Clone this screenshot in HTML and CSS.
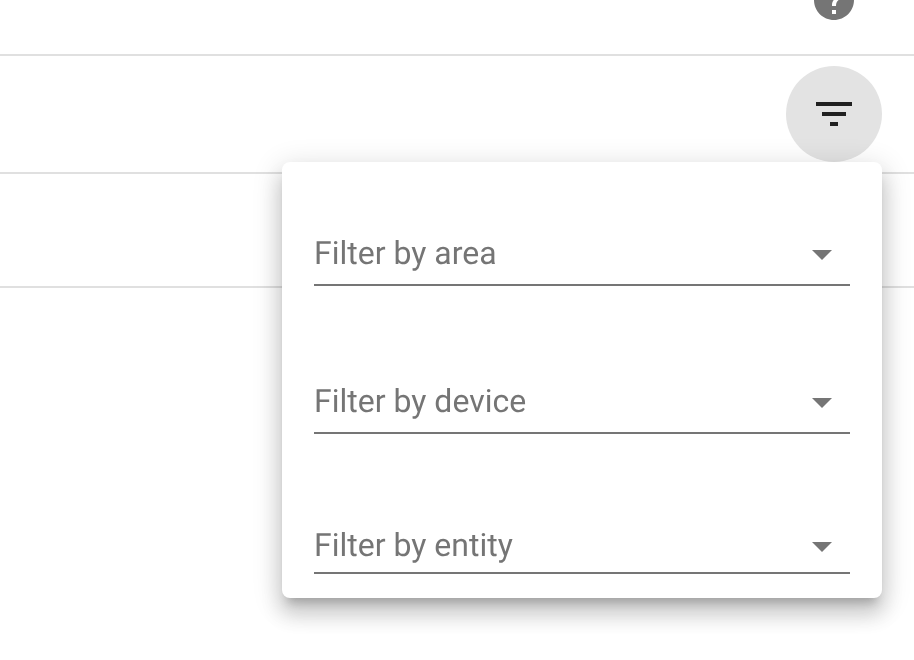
FILE: index.html
```html
<!DOCTYPE html>
<html lang="en">
<head>
<meta charset="utf-8">
<title>Filters</title>
<link rel="stylesheet" href="styles.css">
</head>
<body>
<div class="page">
  <div class="row row-help">
    <svg class="help-icon" viewBox="0 0 24 24" aria-hidden="true"><path d="M12 2C6.48 2 2 6.48 2 12s4.48 10 10 10 10-4.48 10-10S17.52 2 12 2zm1 17h-2v-2h2v2zm2.07-7.75l-.9.92C13.45 12.9 13 13.5 13 15h-2v-.5c0-1.1.45-2.1 1.17-2.83l1.24-1.26c.37-.36.59-.86.59-1.41 0-1.1-.9-2-2-2s-2 .9-2 2H8c0-2.21 1.79-4 4-4s4 1.79 4 4c0 .88-.36 1.68-.93 2.25z"/></svg>
  </div>
  <div class="row row-filter">
    <button class="filter-button" type="button" aria-label="Filter">
      <svg class="filter-icon" viewBox="0 0 24 24" aria-hidden="true"><path d="M10 18h4v-2h-4v2zM3 6v2h18V6H3zm3 7h12v-2H6v2z"/></svg>
    </button>
  </div>
  <div class="row row-empty"></div>
  <div class="menu">
    <div class="field">
      <span class="label">Filter by area</span>
      <svg class="caret" viewBox="0 0 24 24" aria-hidden="true"><path d="M7 10l5 5 5-5z"/></svg>
    </div>
    <div class="field">
      <span class="label">Filter by device</span>
      <svg class="caret" viewBox="0 0 24 24" aria-hidden="true"><path d="M7 10l5 5 5-5z"/></svg>
    </div>
    <div class="field field-last">
      <span class="label">Filter by entity</span>
      <svg class="caret" viewBox="0 0 24 24" aria-hidden="true"><path d="M7 10l5 5 5-5z"/></svg>
    </div>
  </div>
</div>
</body>
</html>
```
FILE: styles.css
```css
html, body {
  margin: 0;
  padding: 0;
  background: #fff;
  overflow: hidden;
}
.page {
  position: relative;
  width: 914px;
  height: 660px;
  overflow: hidden;
  font-family: Roboto, "Liberation Sans", sans-serif;
}
.row {
  display: flex;
  justify-content: flex-end;
  padding-right: 32px;
  border-bottom: 2px solid #e0e0e0;
  box-sizing: border-box;
}
.row-help {
  height: 56px;
  padding-right: 56px;
  align-items: flex-start;
}
.help-icon {
  width: 48px;
  height: 48px;
  margin-top: -24px;
  fill: #757575;
  flex: none;
}
.row-filter {
  height: 118px;
  padding-top: 10px;
  align-items: flex-start;
}
.filter-button {
  width: 96px;
  height: 96px;
  padding: 0;
  border: 0;
  border-radius: 50%;
  background: #e3e3e3;
  display: flex;
  align-items: center;
  justify-content: center;
}
.filter-icon {
  width: 48px;
  height: 48px;
  fill: #212121;
}
.row-empty {
  height: 114px;
  border-bottom-width: 2px;
}
.menu {
  position: absolute;
  left: 282px;
  top: 162px;
  width: 600px;
  height: 436px;
  box-sizing: border-box;
  padding: 12px 32px 24px;
  display: flex;
  flex-direction: column;
  gap: 36px;
  background: #fff;
  border-radius: 8px;
  box-shadow: 0 10px 10px -6px rgba(0,0,0,.2), 0 16px 20px 2px rgba(0,0,0,.14), 0 6px 28px 4px rgba(0,0,0,.12);
}
.field {
  height: 112px;
  flex: none;
  box-sizing: border-box;
  padding-bottom: 6px;
  border-bottom: 2px solid #757575;
  display: flex;
  align-items: flex-end;
  justify-content: space-between;
  color: #757575;
}
.field-last {
  margin-top: -8px;
  padding-bottom: 2px;
}
.label {
  font-size: 32px;
  line-height: 48px;
  margin-bottom: 1px;
  text-rendering: geometricPrecision;
  will-change: transform;
}
.caret {
  width: 48px;
  height: 48px;
  margin-right: 4px;
  fill: #757575;
  flex: none;
}
```
